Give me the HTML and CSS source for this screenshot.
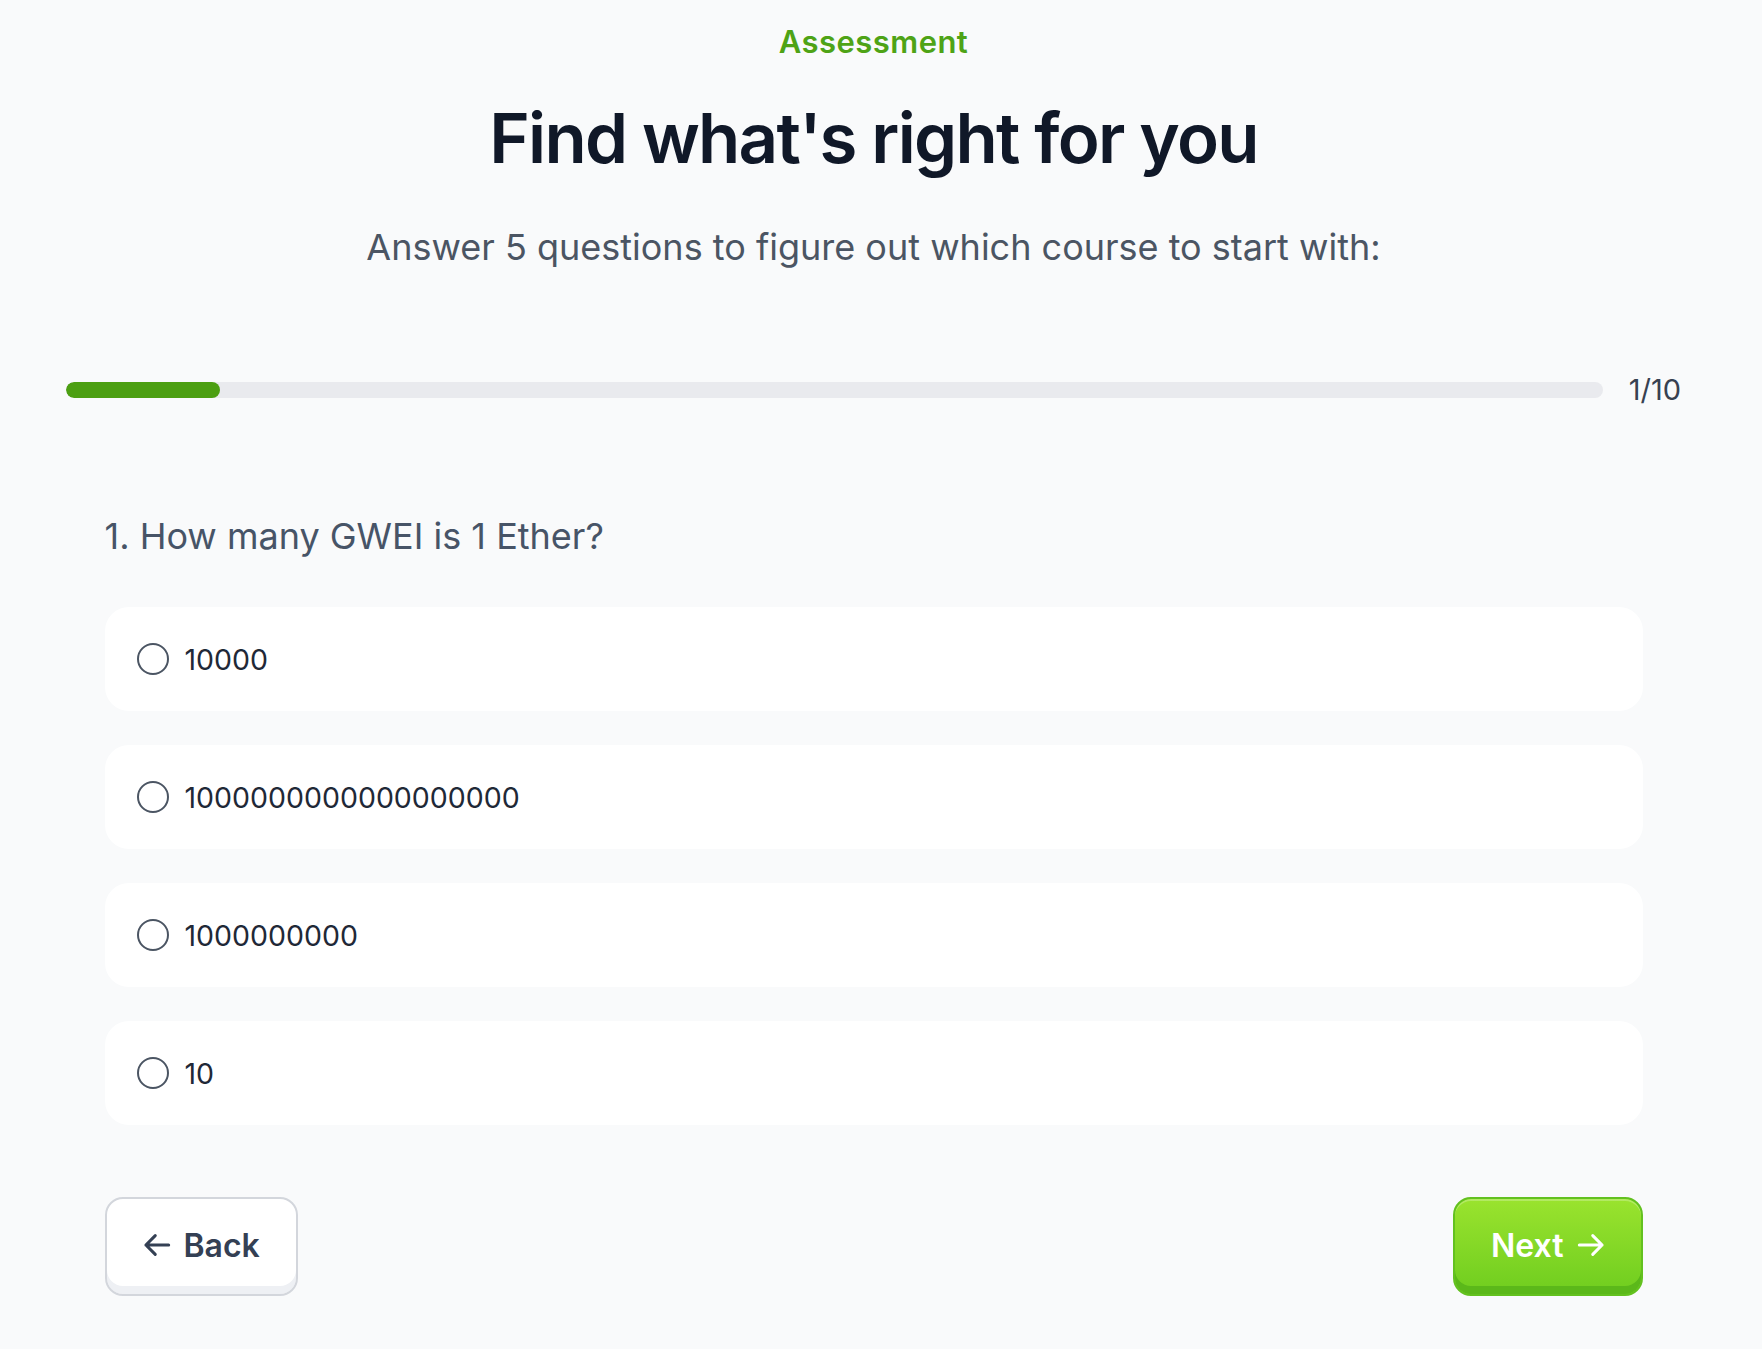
FILE: index.html
```html
<!DOCTYPE html>
<html lang="en">
<head>
    <meta charset="UTF-8">
    <meta name="viewport" content="width=device-width, initial-scale=1.0">
    <title>Assessment</title>
    <link rel="stylesheet" href="styles.css">
</head>
<body>
    <main class="quiz">
        <header class="intro">
            <p class="eyebrow">Assessment</p>
            <h1 class="title">Find what's right for you</h1>
            <p class="lead">Answer 5 questions to figure out which course to start with:</p>
        </header>

        <div class="progress">
            <div class="track"><div class="fill" style="width: 10%"></div></div>
            <span class="count">1/10</span>
        </div>

        <section class="question">
            <h2 class="question-title">1. How many GWEI is 1 Ether?</h2>
            <div class="options">
                <label class="option"><input type="radio" name="q1" value="a"><span>10000</span></label>
                <label class="option"><input type="radio" name="q1" value="b"><span>1000000000000000000</span></label>
                <label class="option"><input type="radio" name="q1" value="c"><span>1000000000</span></label>
                <label class="option"><input type="radio" name="q1" value="d"><span>10</span></label>
            </div>
        </section>

        <div class="actions">
            <button class="btn btn-back" type="button">
                <svg class="arrow" viewBox="0 0 24 24" aria-hidden="true"><path d="M22 12H2.5M10.5 4L2.5 12l8 8"/></svg>
                Back
            </button>
            <button class="btn btn-next" type="button">
                Next
                <svg class="arrow" viewBox="0 0 24 24" aria-hidden="true"><path d="M2 12h19.5M13.5 4l8 8-8 8"/></svg>
            </button>
        </div>
    </main>
</body>
</html>
```

FILE: styles.css
```css
* {
    box-sizing: border-box;
}

body {
    margin: 0;
    padding-right: 15px;
    background-color: #f9fafb;
    font-family: 'Inter', 'Noto Sans', sans-serif;
    color: #111827;
}

.quiz {
    padding-top: 24px;
    padding-bottom: 40px;
}

.intro {
    text-align: center;
}

.eyebrow {
    margin: 0;
    font-size: 31px;
    line-height: 36px;
    font-weight: 600;
    color: #4ea316;
    letter-spacing: 0.015em;
}

.title {
    margin: 36px 0 0;
    font-size: 69px;
    line-height: 84px;
    font-weight: 600;
    letter-spacing: -0.025em;
    color: #101828;
}

.lead {
    margin: 45px 0 0;
    font-size: 36px;
    line-height: 44px;
    color: #4b5563;
}

.progress {
    display: flex;
    align-items: center;
    gap: 26px;
    margin-top: 105px;
    padding: 0 66px 0 66px;
}

.track {
    flex: 1;
    height: 16px;
    border-radius: 8px;
    background: #e9eaee;
    overflow: hidden;
}

.fill {
    height: 100%;
    border-radius: 8px;
    background: #4c9f12;
}

.count {
    font-size: 29px;
    line-height: 32px;
    color: #374151;
}

.question {
    max-width: 1538px;
    margin: 108px auto 0;
}

.question-title {
    margin: 0;
    font-size: 36px;
    line-height: 44px;
    font-weight: 400;
    color: #475467;
}

.options {
    display: flex;
    flex-direction: column;
    gap: 34px;
    margin-top: 49px;
}

.option {
    display: flex;
    align-items: center;
    gap: 16px;
    height: 104px;
    padding: 0 32px;
    border-radius: 24px;
    background: #ffffff;
    font-size: 28.5px;
    color: #1f2937;
    cursor: pointer;
}

.option input {
    appearance: none;
    width: 32px;
    height: 32px;
    margin: 0;
    border: 2px solid #4b5563;
    border-radius: 50%;
    background: #ffffff;
}

.option input:checked {
    border-color: #4c9f12;
    box-shadow: inset 0 0 0 6px #ffffff;
    background: #4c9f12;
}

.actions {
    display: flex;
    justify-content: space-between;
    max-width: 1538px;
    margin: 72px auto 0;
}

.btn {
    display: inline-flex;
    align-items: center;
    gap: 13px;
    height: 99px;
    padding: 0 36px 3px;
    border-radius: 18px;
    font-family: inherit;
    font-size: 32px;
    font-weight: 600;
    cursor: pointer;
}

.btn .arrow {
    width: 28px;
    height: 28px;
    fill: none;
    stroke: currentColor;
    stroke-width: 2.6;
    stroke-linecap: round;
    stroke-linejoin: round;
}

.btn-back {
    border: 2px solid #d3d6dc;
    background: #ffffff;
    color: #344054;
    box-shadow: inset 0 -8px 0 #eef0f4;
}

.btn-next {
    border: 2px solid #63c11f;
    background: linear-gradient(#9ae32e, #6fcd1f);
    color: #ffffff;
    box-shadow: inset 0 -8px 0 #5bb81a, inset 0 2px 0 rgba(255, 255, 255, 0.25);
}
```
